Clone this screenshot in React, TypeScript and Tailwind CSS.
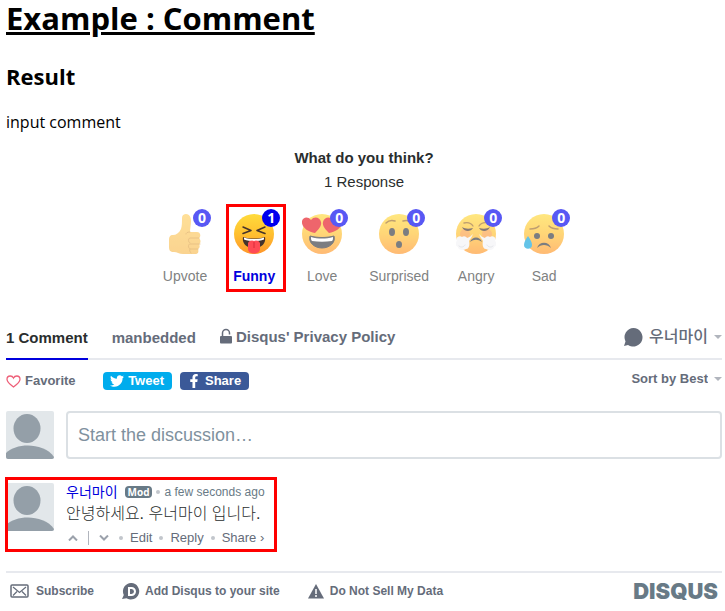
import { useState, type ReactNode } from 'react'
import { FaFacebookF, FaTwitter } from 'react-icons/fa'

type Reaction = {
  id: string
  label: string
  count: number
  art: ReactNode
}

function Face({ children }: { children: ReactNode }) {
  return (
    <>
      <circle cx="20" cy="20" r="20" fill="url(#face)" />
      {children}
    </>
  )
}

const reactions: Reaction[] = [
  {
    id: 'upvote',
    label: 'Upvote',
    count: 0,
    art: (
      <>
        <path
          d="M4 26c0-3 1-5 4-5 3 0 6-2 8-6 1-3 1-7 1-11 0-3 2-4 4-4 4 0 5 4 5 7 0 4-1 7-1 11h7c4 0 4 5 2 6 2 2 2 5 0 6 1 2 1 4-1 5 1 3 0 5-3 5H18c-4 0-6-2-9-2-4 0-5-2-5-5z"
          fill="url(#hand)"
        />
        <path
          d="M25 18c-3 0-4 1-4 2m13 4h-9c-2 0-2 5 0 5m10 1H25c-2 0-2 4 0 5h8m-8 0c-1 1 0 3 1 4"
          fill="none"
          stroke="#dfa245"
          strokeWidth="1"
          strokeLinecap="round"
        />
      </>
    ),
  },
  {
    id: 'funny',
    label: 'Funny',
    count: 1,
    art: (
      <Face>
        <path
          d="M9 13l8 3.500-8 3M31 13l-8 3.500 8 3"
          fill="none"
          stroke="#45332c"
          strokeWidth="1.500"
          strokeLinecap="round"
          strokeLinejoin="round"
        />
        <path d="M9 23c7 2 15 2 22 0 1 5-2 9-6 10H15c-4-1-7-5-6-10z" fill="#45332c" />
        <path d="M10 23.500c6 2 14 2 20 0v2c-6 2-14 2-20 0z" fill="#fff" />
        <path d="M14 29c1-3 5-3 6-2 1-1 5-1 6 2v6c0 6-12 6-12 0z" fill="#ff4b55" />
        <path d="M20 28v6" stroke="#d92c3b" strokeWidth="1" />
      </Face>
    ),
  },
  {
    id: 'love',
    label: 'Love',
    count: 0,
    art: (
      <Face>
        <path d="M13 19C6 18-1 13 0 7c1-4 6-5 9-1 3-4 9-3 10 2 1 4-3 8-6 11z" fill="#e6141e" />
        <path d="M27 19c7-1 14-6 13-12-1-4-6-5-9-1-3-4-9-3-10 2-1 4 3 8 6 11z" fill="#e6141e" />
        <path
          d="M8 22c8 2 16 2 24 0 2 6-4 12-12 12S6 28 8 22z"
          fill="#35383f"
          stroke="#35383f"
          strokeWidth="1"
        />
        <path d="M9 23c7 2 15 2 22 0 0 2 0 3-1 4-7 1-13 1-20 0-1-1-1-2-1-4z" fill="#fff" />
      </Face>
    ),
  },
  {
    id: 'surprised',
    label: 'Surprised',
    count: 0,
    art: (
      <Face>
        <path
          d="M7 9c3-3 6-3 9-2M33 9c-3-3-6-3-9-2"
          fill="none"
          stroke="#9d6b24"
          strokeWidth="1.500"
          strokeLinecap="round"
        />
        <ellipse cx="13" cy="18" rx="3" ry="4" fill="#35383f" />
        <ellipse cx="27" cy="18" rx="3" ry="4" fill="#35383f" />
        <ellipse cx="20" cy="30.500" rx="3" ry="3.500" fill="#35383f" />
      </Face>
    ),
  },
  {
    id: 'angry',
    label: 'Angry',
    count: 0,
    art: (
      <Face>
        <circle cx="9" cy="20" r="5" fill="#f77d55" opacity=".5" />
        <circle cx="31" cy="20" r="5" fill="#f77d55" opacity=".5" />
        <path
          d="M8 9c4-1 7 0 9 3M32 9c-4-1-7 0-9 3"
          fill="none"
          stroke="#9d6b24"
          strokeWidth="1.300"
          strokeLinecap="round"
        />
        <path d="M6 13c3 2 7 2 11 1-2 4-9 4-11-1zM34 13c-3 2-7 2-11 1 2 4 9 4 11-1z" fill="#45332c" />
        <path
          d="M17 20c-1 3-3 5-4 7 1 4 0 8-3 8-3 2-8 1-8-2-3-1-3-5-1-6-2-4 3-6 5-4 2-2 5 0 5 1 3-1 4-2 6-4zM23 20c1 3 3 5 4 7-1 4 0 8 3 8 3 2 8 1 8-2 3-1 3-5 1-6 2-4-3-6-5-4-2-2-5 0-5 1-3-1-4-2-6-4z"
          fill="#f3f3f6"
        />
        <path d="M14 28c2-6 10-6 12 0-4-3-8-3-12 0z" fill="#35383f" />
        <path
          d="M3 32c2 2 5 1 6-1M37 32c-2 2-5 1-6-1"
          fill="none"
          stroke="#d5d9df"
          strokeWidth="1"
          strokeLinecap="round"
        />
      </Face>
    ),
  },
  {
    id: 'sad',
    label: 'Sad',
    count: 0,
    art: (
      <Face>
        <path
          d="M6 15c4 0 7-1 9-3M34 15c-4 0-7-1-9-3"
          fill="none"
          stroke="#9d6b24"
          strokeWidth="1.500"
          strokeLinecap="round"
        />
        <circle cx="13" cy="22" r="3" fill="#35383f" />
        <circle cx="27" cy="22" r="3" fill="#35383f" />
        <path d="M13 34c2-7 12-7 14 0-4-4-10-4-14 0z" fill="#35383f" />
        <path d="M4 22c2 3 4 6 4 9 0 5-8 5-8 0 0-3 2-6 4-9z" fill="#12a5dd" />
      </Face>
    ),
  },
]

function Avatar() {
  return (
    <svg viewBox="0 0 48 48" className="size-12 shrink-0 rounded-xs" aria-hidden="true">
      <rect width="48" height="48" fill="#e2e7ea" />
      <ellipse cx="21" cy="17.500" rx="13.500" ry="14.500" fill="#949fa8" />
      <path d="M0 42c5-5 13-7.500 22-7.500S43 38 48 46v2H0z" fill="#949fa8" />
    </svg>
  )
}

function Caret() {
  return (
    <svg viewBox="0 0 8 4" className="h-1 w-2 shrink-0" aria-hidden="true">
      <path d="M0 0h8L4 4z" fill="#b1b5bd" />
    </svg>
  )
}

function Dot() {
  return <span className="block size-1 shrink-0 rounded-full bg-[#c2c6cc]" />
}

export default function App() {
  const [selected, setSelected] = useState('funny')
  const [message, setMessage] = useState('')

  return (
    <div className="min-h-screen bg-white pr-[3px] pl-1.5 font-['Liberation_Sans','Noto_Sans_CJK_KR',sans-serif] text-[#656c7a]">
      <svg className="absolute size-0" aria-hidden="true">
        <defs>
          <linearGradient id="face" x1="0" y1="0" x2="0" y2="1">
            <stop offset="0" stopColor="#ffdb3c" />
            <stop offset=".5" stopColor="#ffc02f" />
            <stop offset="1" stopColor="#ff962a" />
          </linearGradient>
          <linearGradient id="hand" x1="0" y1="0" x2="0" y2="1">
            <stop offset="0" stopColor="#ffcf62" />
            <stop offset="1" stopColor="#f8bd55" />
          </linearGradient>
        </defs>
      </svg>

      <header className="font-['Open_Sans','Noto_Sans_CJK_KR',sans-serif] text-black">
        <h1 className="text-[31px] leading-9 font-bold underline">Example : Comment</h1>
        <h2 className="mt-6 text-[22px] leading-8 font-bold">Result</h2>
        <p className="mt-5 text-base leading-5">input comment</p>
      </header>

      {/* Reactions */}
      <section className="mt-3.5 flex flex-col items-center text-[#2a2e2e]">
        <h3 className="text-[15px] leading-6 font-bold">What do you think?</h3>
        <p className="text-[15px] leading-6">1 Response</p>
        <div className="mt-5 flex">
          {reactions.map((reaction) => {
            const active = reaction.id === selected
            return (
              <button
                key={reaction.id}
                type="button"
                aria-pressed={active}
                onClick={() => setSelected(reaction.id)}
                className="relative flex min-w-[68px] flex-col items-center px-[13px]"
              >
                <span className="relative">
                  <svg
                    viewBox="0 0 40 40"
                    className={active ? 'size-10' : 'size-10 opacity-65'}
                    aria-hidden="true"
                  >
                    {reaction.art}
                  </svg>
                  <span
                    className={`absolute -top-[5px] -right-1.5 flex size-[18px] items-center justify-center rounded-full font-['Open_Sans',sans-serif] text-sm leading-none font-bold text-white ${
                      active ? 'bg-[#0000ee]' : 'bg-[#5858f4]'
                    }`}
                  >
                    {reaction.count}
                  </span>
                </span>
                <span
                  className={`mt-3 text-sm leading-5 ${
                    active ? 'font-bold text-[#0000dd]' : 'text-[#7f8282]'
                  }`}
                >
                  {reaction.label}
                </span>
                {reaction.id === 'funny' && (
                  <span className="absolute -top-2.5 right-0.5 -bottom-1.5 left-1.5 border-3 border-[#ff0000]" />
                )}
              </button>
            )
          })}
        </div>
      </section>

      {/* Tabs */}
      <nav className="mt-8 flex h-[42px] items-stretch gap-6 border-b-2 border-[#e7e9ee] text-[15px] font-bold">
        <a href="#comments" className="-mb-0.5 flex items-center border-b-2 border-[#0000dd] text-[#2a2e2e]">
          1 Comment
        </a>
        <a href="#site" className="flex items-center">
          manbedded
        </a>
        <a href="#privacy" className="flex items-center gap-1 pb-0.5">
          <svg viewBox="0 0 12 16" className="-mt-0.5 h-4 w-3" aria-hidden="true">
            <path d="M2.500 9V5a3.500 3.500 0 0 1 7 0v1.500" fill="none" stroke="#656c7a" strokeWidth="1.500" />
            <rect y="8" width="12" height="7.500" rx="1" fill="#656c7a" />
          </svg>
          Disqus' Privacy Policy
        </a>
        <button type="button" className="ml-auto flex items-center gap-1.5 pb-0.5">
          <svg viewBox="0 0 19 19" className="size-[19px]" aria-hidden="true">
            <path d="M9.500 0a9.300 9.300 0 1 1-5.500 17L0 18l1.500-4.500A9.300 9.300 0 0 1 9.500 0z" fill="#656c7a" />
          </svg>
          <span className="text-base font-medium">우너마이</span>
          <Caret />
        </button>
      </nav>

      {/* Actions */}
      <div className="flex h-[42px] items-center text-[13px] font-bold">
        <button type="button" className="flex items-center gap-1">
          <svg viewBox="0 0 15 13" className="h-[13px] w-[15px]" aria-hidden="true">
            <path
              d="M7.500 12C4 9.500 1 7 1 4.300 1 2.300 2.400 1 4.200 1c1.500 0 2.700.8 3.300 2C8.100 1.800 9.300 1 10.800 1 12.600 1 14 2.300 14 4.300 14 7 11 9.500 7.500 12z"
              fill="none"
              stroke="#ee6079"
              strokeWidth="1.300"
            />
          </svg>
          Favorite
        </button>
        <button
          type="button"
          className="ml-[27px] flex h-[18px] w-[69px] items-center justify-center gap-1 rounded-sm bg-[#00aced] text-white"
        >
          <FaTwitter className="size-3.5" />
          Tweet
        </button>
        <button
          type="button"
          className="ml-2 flex h-[18px] w-[69px] items-center justify-center gap-1 rounded-sm bg-[#3b5998] text-white"
        >
          <FaFacebookF className="size-3.5" />
          Share
        </button>
        <div className="ml-auto flex items-center gap-1.5 pb-1">
          <select
            aria-label="Sort comments"
            className="field-sizing-content appearance-none bg-transparent font-bold"
          >
            <option>Sort by Best</option>
            <option>Sort by Newest</option>
            <option>Sort by Oldest</option>
          </select>
          <Caret />
        </div>
      </div>

      {/* Composer */}
      <div className="mt-[9px] flex gap-3">
        <Avatar />
        <input
          type="text"
          aria-label="Comment"
          placeholder="Start the discussion…"
          value={message}
          onChange={(e) => setMessage(e.target.value)}
          className="h-12 min-w-0 flex-1 rounded border-2 border-[#dbe0e4] px-2.5 text-lg placeholder:text-[#7f919e]"
        />
      </div>

      {/* Comment */}
      <article className="relative mt-6 flex w-fit gap-3 pr-3">
        <Avatar />
        <div>
          <div className="flex h-[18px] items-center text-xs">
            <a href="#author" className="text-sm text-[#0000dd]">
              우너마이
            </a>
            <span className="ml-[7px] rounded-sm bg-[#687a86] px-[3px] font-['Open_Sans',sans-serif] text-[10px] leading-3 font-bold text-white">
              Mod
            </span>
            <span className="mx-1">
              <Dot />
            </span>
            <time className="text-[#687a86]">a few seconds ago</time>
          </div>
          <p className="text-base leading-[26px] font-light text-[#2a2e2e]">안녕하세요. 우너마이 입니다.</p>
          <div className="mt-px flex h-5 items-center gap-2 text-[13px]">
            <button type="button" aria-label="Upvote comment" className="px-0.5">
              <svg viewBox="0 0 10 6" className="h-1.5 w-2.5" fill="none" stroke="#9ba1ab" strokeWidth="2">
                <path d="M1 5.500l4-4 4 4" />
              </svg>
            </button>
            <span className="h-3.5 w-px bg-[#b1b5bd]" />
            <button type="button" aria-label="Downvote comment" className="px-0.5">
              <svg viewBox="0 0 10 6" className="h-1.5 w-2.5" fill="none" stroke="#9ba1ab" strokeWidth="2">
                <path d="M1 .500l4 4 4-4" />
              </svg>
            </button>
            <div className="flex items-center gap-[7px]">
              <Dot />
              <button type="button">Edit</button>
              <Dot />
              <button type="button">Reply</button>
              <Dot />
              <button type="button">Share ›</button>
            </div>
          </div>
        </div>
        <span className="pointer-events-none absolute -top-1.5 right-0 -bottom-1 -left-px border-3 border-[#ff0000]" />
      </article>

      <footer className="mt-[23px] flex items-center border-t-2 border-[#e7e9ee] pt-0.5 pl-1 text-xs font-bold">
        <a href="#subscribe" className="flex items-center gap-[7px]">
          <svg viewBox="0 0 19 14" className="h-3.5 w-[19px]" fill="none" stroke="#656c7a" aria-hidden="true">
            <rect x="1" y="1" width="17" height="12" rx="1" strokeWidth="1.500" />
            <path d="M3 3l6.500 5.500L16 3M3 11.500l4-4M16 11.500l-4-4" strokeWidth="1.200" />
          </svg>
          Subscribe
        </a>
        <a href="#add" className="ml-7 flex items-center gap-[5px]">
          <svg viewBox="0 0 18 17" className="h-[17px] w-[18px]" aria-hidden="true">
            <path d="M9.500 0a8.300 8.300 0 1 1-5 15.300L0 16l1.800-4A8.300 8.300 0 0 1 9.500 0z" fill="#656c7a" />
            <path d="M7 5h2.500a3.400 3.400 0 0 1 0 7H7z" fill="none" stroke="#fff" strokeWidth="2" />
          </svg>
          Add Disqus to your site
        </a>
        <a href="#data" className="ml-7 flex items-center gap-1.5">
          <svg viewBox="0 0 16 15" className="h-[15px] w-4" aria-hidden="true">
            <path d="M8 0l8 14.500H0z" fill="#656c7a" />
            <path d="M8 5v5M8 11v2" stroke="#fff" strokeWidth="1.500" />
          </svg>
          Do Not Sell My Data
        </a>
        <a href="#disqus" className="ml-auto pr-1 font-['Inter',sans-serif] text-[22px] leading-8 font-black text-[#687a86]">
          DISQUS
        </a>
      </footer>
    </div>
  )
}
